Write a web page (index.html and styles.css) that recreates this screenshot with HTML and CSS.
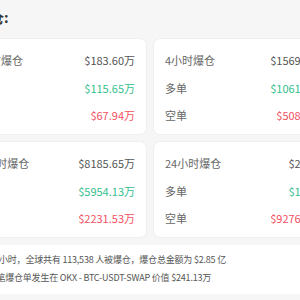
FILE: index.html
```html
<!DOCTYPE html>
<html lang="zh-CN">
<head>
  <meta charset="UTF-8">
  <meta name="viewport" content="width=device-width, initial-scale=1.0">
  <title>爆仓统计</title>
  <link rel="stylesheet" href="styles.css">
</head>
<body>
  <div class="page">
    <p class="title">总爆仓:</p>

    <div class="grid">
      <div class="card">
        <div class="row"><span class="label">1小时爆仓</span><span class="value">$183.60万</span></div>
        <div class="row"><span class="label">多单</span><span class="value up">$115.65万</span></div>
        <div class="row"><span class="label">空单</span><span class="value down">$67.94万</span></div>
      </div>

      <div class="card">
        <div class="row"><span class="label">4小时爆仓</span><span class="value">$1569.46万</span></div>
        <div class="row"><span class="label">多单</span><span class="value up">$1061.20万</span></div>
        <div class="row"><span class="label">空单</span><span class="value down">$508.26万</span></div>
      </div>

      <div class="card">
        <div class="row"><span class="label">12小时爆仓</span><span class="value">$8185.65万</span></div>
        <div class="row"><span class="label">多单</span><span class="value up">$5954.13万</span></div>
        <div class="row"><span class="label">空单</span><span class="value down">$2231.53万</span></div>
      </div>

      <div class="card">
        <div class="row"><span class="label">24小时爆仓</span><span class="value">$2.85亿</span></div>
        <div class="row"><span class="label">多单</span><span class="value up">$1.92亿</span></div>
        <div class="row"><span class="label">空单</span><span class="value down">$9276.08万</span></div>
      </div>
    </div>

    <div class="summary">
      <p>过去 24小时，全球共有 113,538 人被爆仓，爆仓总金额为 $2.85 亿</p>
      <p>最大单笔爆仓单发生在 OKX - BTC-USDT-SWAP 价值 $241.13万</p>
    </div>
  </div>
</body>
</html>
```

FILE: styles.css
```css
body {
  margin: 0;
  padding: 0;
  background-color: #f6f6f6;
  font-family: "Noto Sans CJK SC", "Noto Sans", sans-serif;
  color: #555;
  overflow: hidden;
}

.page {
  width: 376px;
  margin: 0 -38px;
}

.title {
  margin: 0;
  height: 39px;
  line-height: 34px;
  font-size: 14px;
  font-weight: bold;
  color: #333;
}

.grid {
  display: grid;
  grid-template-columns: 1fr 1fr;
  gap: 8px;
}

.card {
  background-color: #fff;
  border-radius: 6px;
  box-shadow: 0 0 0 1px #efefef;
  padding: 8px 11px 4.5px;
}

.row {
  display: flex;
  justify-content: space-between;
  height: 27.5px;
  line-height: 27.5px;
  font-size: 11px;
}

.label {
  color: #666;
}

.value {
  color: #555;
}

.value.up {
  color: #35c08e;
}

.value.down {
  color: #f2505f;
}

.summary {
  margin-top: 8px;
  background-color: #fff;
  padding: 6px 8px 7px;
  font-size: 9px;
  letter-spacing: -0.2px;
  color: #555;
}

.summary p {
  margin: 0;
  line-height: 18px;
}
```
